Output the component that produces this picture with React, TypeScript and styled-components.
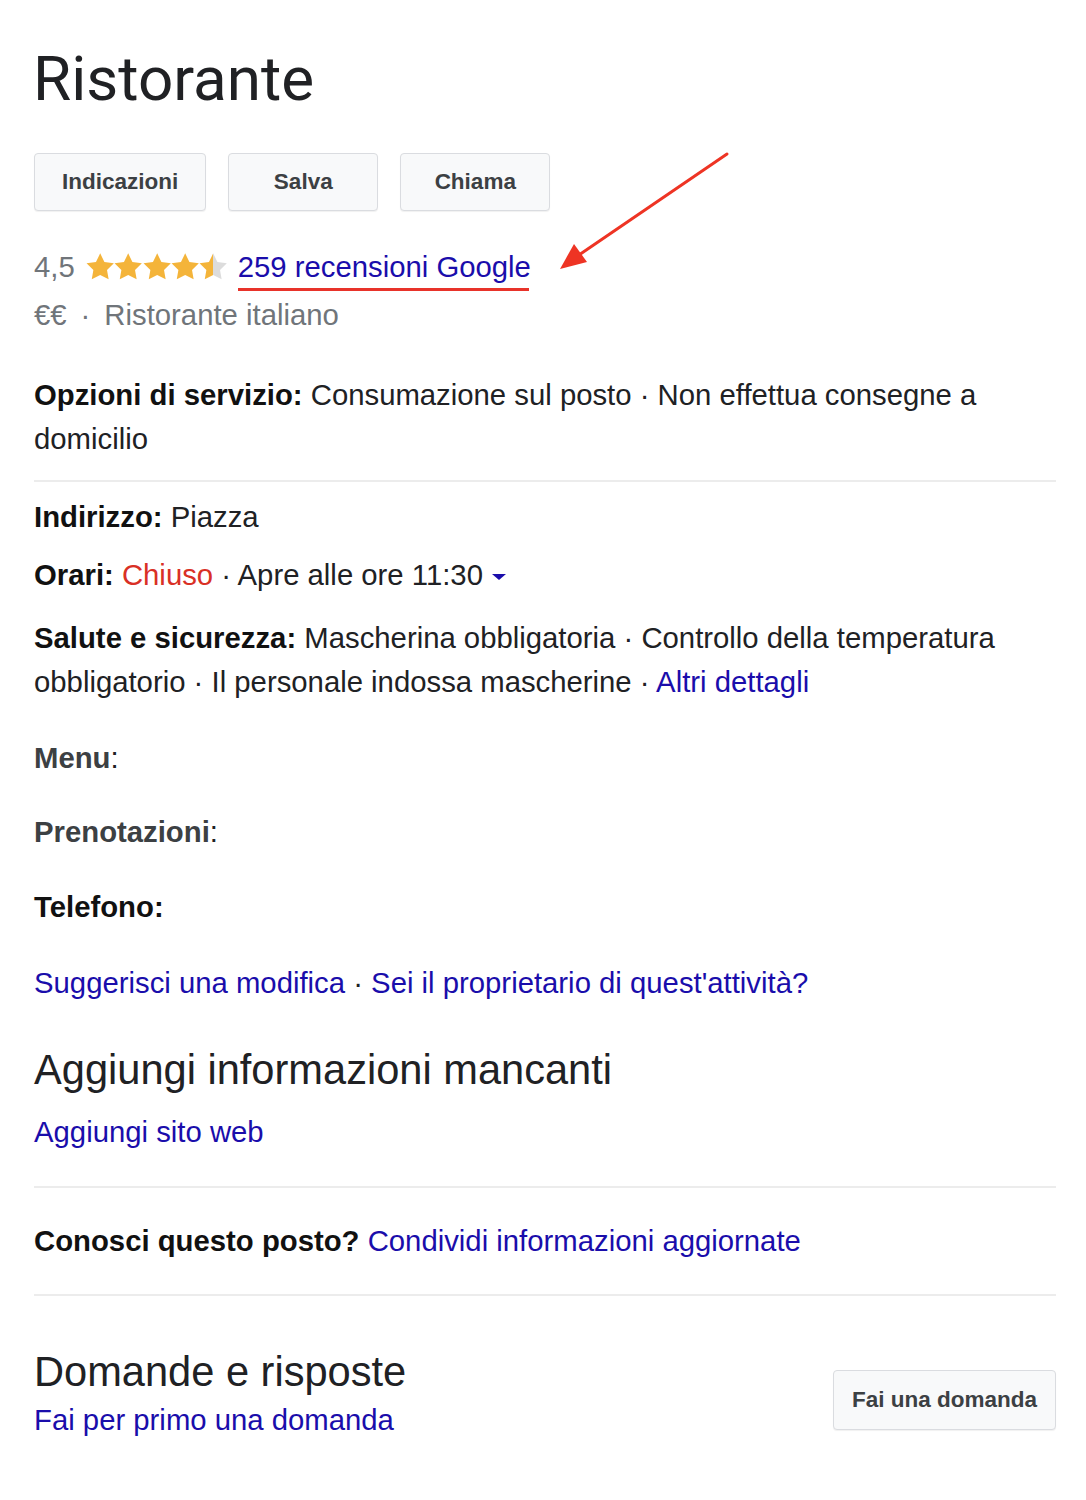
import React from 'react';
import styled, { createGlobalStyle } from 'styled-components';

const GlobalStyle = createGlobalStyle`
  body {
    margin: 0;
    background: #ffffff;
    font-family: 'Liberation Sans', Arial, sans-serif;
    color: #202124;
  }
`;

const Page = styled.div`
  position: relative;
  padding: 43px 30px 40px 34px;
  font-size: 29.3px;
`;

const Title = styled.h1`
  margin: 0 0 0 -1px;
  font-family: Roboto, 'Liberation Sans', sans-serif;
  font-weight: 400;
  font-size: 62px;
  line-height: 72px;
  color: #202124;
`;

const ButtonRow = styled.div`
  display: flex;
  gap: 22px;
  margin-top: 38px;
`;

const ActionButton = styled.button`
  height: 58px;
  min-width: 150px;
  padding: 0 27px;
  border: 1px solid #dadce0;
  border-radius: 4px;
  background: #f8f9fa;
  box-shadow: 0 1px 1px rgba(0, 0, 0, 0.06);
  font-family: 'Liberation Sans', Arial, sans-serif;
  font-weight: 700;
  font-size: 22.5px;
  color: #3c4043;
  cursor: pointer;
`;

const RatingRow = styled.div`
  display: flex;
  align-items: center;
  height: 48px;
  margin-top: 32px;
  line-height: 48px;
`;

const Muted = styled.span`
  color: #70757a;
`;

const Stars = styled.span`
  display: flex;
  margin: 0 10px 0 11px;
`;

const Link = styled.a`
  color: #1a0dab;
  text-decoration: none;
  cursor: pointer;
`;

const MarkedLink = styled(Link)`
  position: relative;
  display: inline-block;
`;

const RedMark = styled.span`
  position: absolute;
  left: 0;
  right: 2px;
  bottom: 0;
  height: 3px;
  background: #e8332a;
`;

const PriceRow = styled.div`
  line-height: 48px;
  color: #70757a;
`;

const Dot = styled.span`
  margin: 0 14px;
`;

const Info = styled.div<{ $top: number }>`
  margin-top: ${p => p.$top}px;
  line-height: 44px;
  color: #202124;
`;

const Label = styled.b<{ $soft?: boolean }>`
  font-weight: 700;
  color: ${p => (p.$soft ? '#3c4043' : '#111111')};
`;

const Closed = styled.span`
  color: #d93025;
`;

const Caret = styled.span`
  display: inline-block;
  margin-left: 9px;
  vertical-align: middle;
  border-left: 7px solid transparent;
  border-right: 7px solid transparent;
  border-top: 6px solid #1a0dab;
`;

const Divider = styled.hr<{ $top: number }>`
  margin: ${p => p.$top}px 0 0;
  border: 0;
  border-top: 2px solid #ececec;
`;

const Heading = styled.h2<{ $top: number }>`
  margin: ${p => p.$top}px 0 0;
  font-weight: 400;
  font-size: 41.6px;
  line-height: 52px;
  color: #202124;
`;

const QaRow = styled.div`
  display: flex;
  justify-content: space-between;
  align-items: flex-start;
`;

const QaButton = styled(ActionButton)`
  height: 60px;
  margin-top: 74px;
  padding: 0 18px;
`;

const Arrow = styled.svg`
  position: absolute;
  left: 550px;
  top: 145px;
`;

const STAR = 'M12 2l3.09 6.26L22 9.27l-5 4.87 1.18 6.88L12 17.77l-6.18 3.25L7 14.14 2 9.27l6.91-1.01L12 2z';

const Star = ({ fill }: { fill: number }) => {
  const id = `half-${fill}`;
  return (
    <svg width="28.4" height="28" viewBox="1.6 1.8 20.8 20.4">
      <defs>
        <linearGradient id={id}>
          <stop offset={`${fill * 100}%`} stopColor="#f4b43a" />
          <stop offset={`${fill * 100}%`} stopColor="#dcdcdc" />
        </linearGradient>
      </defs>
      <path d={STAR} fill={`url(#${id})`} />
    </svg>
  );
};

const App = () => {
  const stars = [1, 1, 1, 1, 0.5];

  return (
    <Page>
      <GlobalStyle />
      <Title>Ristorante</Title>

      <ButtonRow>
        <ActionButton>Indicazioni</ActionButton>
        <ActionButton>Salva</ActionButton>
        <ActionButton>Chiama</ActionButton>
      </ButtonRow>

      <RatingRow>
        <Muted>4,5</Muted>
        <Stars>
          {stars.map((s, i) => (
            <Star key={i} fill={s} />
          ))}
        </Stars>
        <MarkedLink>
          259 recensioni Google
          <RedMark />
        </MarkedLink>
      </RatingRow>
      <PriceRow>
        €€<Dot>·</Dot>Ristorante italiano
      </PriceRow>

      <Info $top={34}>
        <Label>Opzioni di servizio:</Label> Consumazione sul posto · Non effettua consegne a domicilio
      </Info>

      <Divider $top={19} />

      <Info $top={13}>
        <Label>Indirizzo:</Label> Piazza
      </Info>
      <Info $top={14}>
        <Label>Orari:</Label> <Closed>Chiuso</Closed> · Apre alle ore 11:30
        <Caret />
      </Info>
      <Info $top={19}>
        <Label>Salute e sicurezza:</Label> Mascherina obbligatoria · Controllo della temperatura
        obbligatorio · Il personale indossa mascherine · <Link>Altri dettagli</Link>
      </Info>
      <Info $top={32}>
        <Label $soft>Menu</Label>:
      </Info>
      <Info $top={30}>
        <Label $soft>Prenotazioni</Label>:
      </Info>
      <Info $top={31}>
        <Label>Telefono:</Label>
      </Info>
      <Info $top={32}>
        <Link>Suggerisci una modifica</Link> · <Link>Sei il proprietario di quest'attività?</Link>
      </Info>

      <Heading $top={39}>Aggiungi informazioni mancanti</Heading>
      <Info $top={14}>
        <Link>Aggiungi sito web</Link>
      </Info>

      <Divider $top={32} />
      <Info $top={31}>
        <Label>Conosci questo posto?</Label> <Link>Condividi informazioni aggiornate</Link>
      </Info>
      <Divider $top={31} />

      <QaRow>
        <div>
          <Heading $top={50}>Domande e risposte</Heading>
          <Info $top={0}>
            <Link>Fai per primo una domanda</Link>
          </Info>
        </div>
        <QaButton>Fai una domanda</QaButton>
      </QaRow>

      <Arrow width="190" height="135" viewBox="0 0 190 135">
        <line x1="177" y1="9" x2="26" y2="112" stroke="#ee3424" strokeWidth="3" strokeLinecap="round" />
        <polygon points="10,124 24,99 37,117" fill="#ee3424" />
      </Arrow>
    </Page>
  );
};

export default App;
